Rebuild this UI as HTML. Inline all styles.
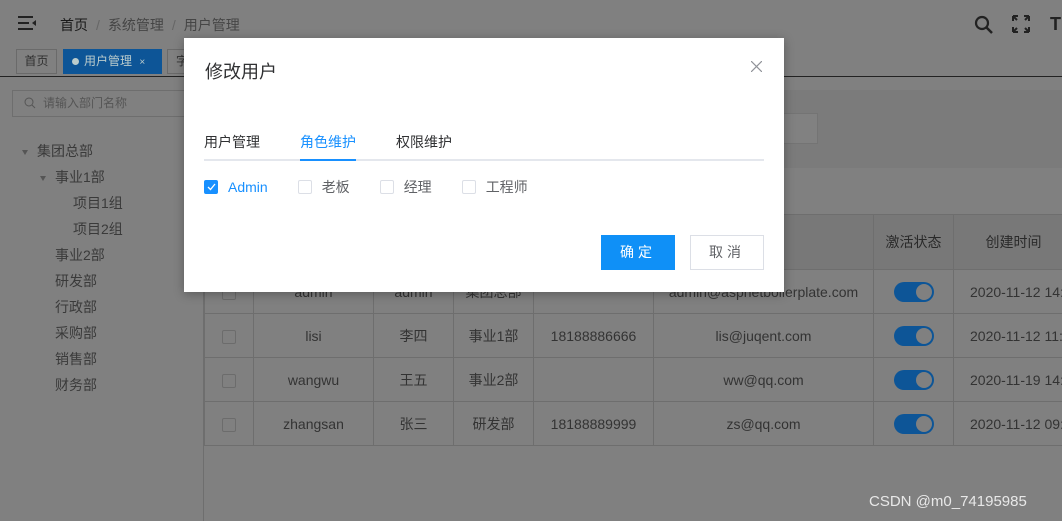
<!DOCTYPE html>
<html><head><meta charset="utf-8"><style>
*{margin:0;padding:0;box-sizing:border-box}
body{width:1062px;height:521px;overflow:hidden;background:#808080;font-family:"Liberation Sans","Noto Sans CJK SC",sans-serif;font-size:14px;color:#303030;position:relative}
.a{position:absolute}
.g{color:#3a3a3a}
.g div{height:26px;line-height:26px;white-space:nowrap}
td{border:1px solid #6e6e6e;text-align:center;color:#333;height:44px}
table{border-collapse:collapse;position:absolute;left:204px;top:214px;width:870px}
.cb{display:inline-block;width:14px;height:14px;border:1px solid #6c6c6c;border-radius:2px;vertical-align:middle}
.sw{display:inline-block;width:40px;height:20px;border-radius:10px;background:#0d5597;position:relative;vertical-align:middle}
.sw:after{content:"";position:absolute;right:2px;top:2px;width:16px;height:16px;border-radius:50%;background:#808080}
.m{background:#fff;left:184px;top:38px;width:600px;height:254px;box-shadow:0 2px 10px rgba(0,0,0,.3)}
.mc{display:inline-block;width:14px;height:14px;border:1px solid #dcdfe6;border-radius:2px;vertical-align:-2px;margin-right:10px}
.ar{display:inline-block;width:0;height:0;border-left:3.5px solid transparent;border-right:3.5px solid transparent;border-top:5px solid #555;margin-right:9px;vertical-align:middle}
</style></head><body>
<svg class="a" style="left:18px;top:16px" width="18" height="14"><rect y="0" width="15" height="2" fill="#222"/><rect y="6" width="11" height="2" fill="#222"/><rect y="12" width="15" height="2" fill="#222"/><path d="M18 4 L14 7 L18 10Z" fill="#222"/></svg>
<div class="a" style="left:60px;top:15px;font-size:14px"><span style="color:#1a1a1a">首页</span><span style="color:#666;margin:0 8px">/</span><span style="color:#454545">系统管理</span><span style="color:#666;margin:0 8px">/</span><span style="color:#454545">用户管理</span></div>
<svg class="a" style="left:974px;top:15px" width="20" height="20"><circle cx="8" cy="8" r="6" stroke="#222" stroke-width="2.2" fill="none"/><path d="M12.5 12.5L18 18" stroke="#222" stroke-width="2.5"/></svg>
<svg class="a" style="left:1012px;top:15px" width="18" height="18" stroke="#222" stroke-width="2" fill="none"><path d="M1 1h5M1 1v5M1 1l4 4M17 1h-5M17 1v5M17 1l-4 4M1 17h5M1 17v-5M1 17l4-4M17 17h-5M17 17v-5M17 17l-4-4"/></svg>
<div class="a" style="left:1050px;top:14px;font-size:18px;font-weight:bold;color:#222">T</div>
<div class="a" style="left:16px;top:49px;width:41px;height:25px;border:1px solid #6a6a6a;font-size:12px;line-height:23px;text-align:center">首页</div>
<div class="a" style="left:63px;top:49px;width:99px;height:25px;background:#0d5597;color:#bcc;font-size:12px;line-height:25px;padding-left:9px"><span style="display:inline-block;width:7px;height:7px;border-radius:50%;background:#bcc;margin-right:5px"></span>用户管理 <span style="font-size:10px;margin-left:4px">×</span></div>
<div class="a" style="left:167px;top:49px;width:30px;height:25px;border:1px solid #6a6a6a;font-size:12px;line-height:23px;padding-left:8px">字</div>
<div class="a" style="left:0;top:76px;width:1062px;height:1px;background:#222"></div>
<div class="a" style="left:203px;top:77px;width:1px;height:444px;background:#6e6e6e"></div>
<div class="a" style="left:12px;top:90px;width:180px;height:27px;border:1px solid #6e6e6e;font-size:12px;color:#555;line-height:25px;padding-left:30px">请输入部门名称</div>
<svg class="a" style="left:24px;top:97px" width="12" height="12"><circle cx="5" cy="5" r="4" stroke="#555" fill="none"/><path d="M8 8l3 3" stroke="#555"/></svg>
<div class="a g" style="left:22px;top:138px;font-size:14px">
<div><span class="ar"></span>集团总部</div>
<div style="padding-left:18px"><span class="ar"></span>事业1部</div>
<div style="padding-left:51px">项目1组</div>
<div style="padding-left:51px">项目2组</div>
<div style="padding-left:33px">事业2部</div>
<div style="padding-left:33px">研发部</div>
<div style="padding-left:33px">行政部</div>
<div style="padding-left:33px">采购部</div>
<div style="padding-left:33px">销售部</div>
<div style="padding-left:33px">财务部</div>
</div>
<div class="a" style="left:204px;top:90px;width:858px;height:78px;background:#7b7b7b"></div>
<div class="a" style="left:760px;top:113px;width:58px;height:31px;background:#818181;border:1px solid #747474"></div>
<div class="a" style="left:204px;top:214px;width:858px;height:55px;background:#787878"></div>
<table>
<tr style="height:55px"><td style="width:49px"></td><td style="width:120px"></td><td style="width:80px"></td><td style="width:80px"></td><td style="width:120px"></td><td style="width:220px">箱</td><td style="width:80px;color:#2a2a2a">激活状态</td><td style="color:#2a2a2a">创建时间</td></tr>
<tr><td><span class="cb"></span></td><td>admin</td><td>admin</td><td>集团总部</td><td></td><td>admin@aspnetboilerplate.com</td><td><span class="sw"></span></td><td style="text-align:left;padding-left:16px">2020-11-12 14:</td></tr>
<tr><td><span class="cb"></span></td><td>lisi</td><td>李四</td><td>事业1部</td><td>18188886666</td><td>lis@juqent.com</td><td><span class="sw"></span></td><td style="text-align:left;padding-left:16px">2020-11-12 11:</td></tr>
<tr><td><span class="cb"></span></td><td>wangwu</td><td>王五</td><td>事业2部</td><td></td><td>ww@qq.com</td><td><span class="sw"></span></td><td style="text-align:left;padding-left:16px">2020-11-19 14:</td></tr>
<tr><td><span class="cb"></span></td><td>zhangsan</td><td>张三</td><td>研发部</td><td>18188889999</td><td>zs@qq.com</td><td><span class="sw"></span></td><td style="text-align:left;padding-left:16px">2020-11-12 09:</td></tr>
</table>
<div class="a" style="left:869px;top:493px;font-size:15px;color:#e8e8e8">CSDN @m0_74195985</div>
<div class="a m">
<div class="a" style="left:21px;top:20px;font-size:18px;color:#303133">修改用户</div>
<svg class="a" style="left:567px;top:23px" width="11" height="11" stroke="#909399" stroke-width="1.2"><path d="M0 0L11 11M11 0L0 11"/></svg>
<div class="a" style="left:20px;top:94px;font-size:14px;color:#303133">用户管理</div>
<div class="a" style="left:116px;top:94px;font-size:14px;color:#1890ff">角色维护</div>
<div class="a" style="left:212px;top:94px;font-size:14px;color:#303133">权限维护</div>
<div class="a" style="left:20px;top:121px;width:560px;height:2px;background:#e4e7ed"></div>
<div class="a" style="left:116px;top:121px;width:56px;height:2px;background:#1890ff"></div>
<div class="a" style="left:20px;top:139px;font-size:14px;color:#606266;white-space:nowrap">
<span class="mc" style="background:#1890ff;border-color:#1890ff;position:relative"><svg class="a" style="left:2px;top:2px" width="9" height="8"><path d="M1 4l2.5 2.5L8 1" stroke="#fff" stroke-width="1.3" fill="none"/></svg></span><span style="color:#1890ff;margin-right:30px">Admin</span><span class="mc"></span><span style="margin-right:30px">老板</span><span class="mc"></span><span style="margin-right:30px">经理</span><span class="mc"></span><span>工程师</span>
</div>
<div class="a" style="left:417px;top:197px;width:74px;height:35px;background:#0f90f7;color:#fff;text-align:center;line-height:35px;font-size:14px;letter-spacing:4px">确定</div>
<div class="a" style="left:506px;top:197px;width:74px;height:35px;border:1px solid #dcdfe6;color:#606266;text-align:center;line-height:33px;font-size:14px;letter-spacing:4px">取消</div>
</div>
</body></html>
